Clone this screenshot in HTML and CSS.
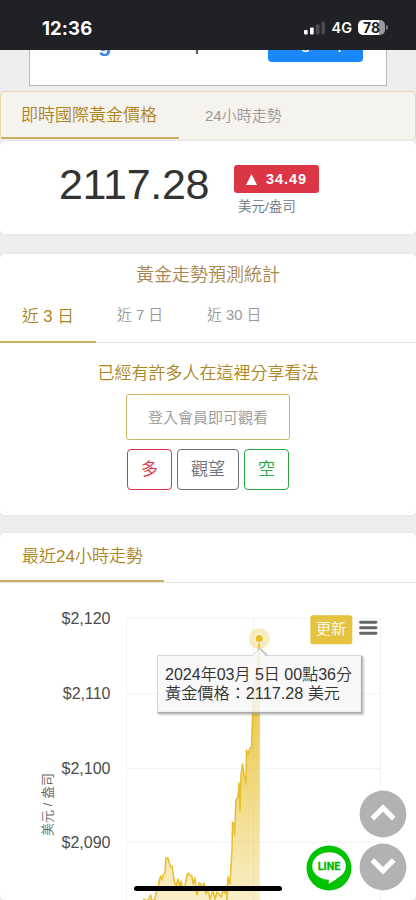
FILE: index.html
```html
<!DOCTYPE html>
<html lang="zh-Hant">
<head>
<meta charset="utf-8">
<title>即時國際黃金價格</title>
<link rel="stylesheet" href="styles.css">
</head>
<body>
<header class="status">
  <span class="clock">12:36</span>
  <div class="signals">
    <svg class="bars" width="21" height="14" viewBox="0 0 21 14"><rect x="0" y="9" width="3.7" height="4.5" rx="1" fill="#fff"/><rect x="6" y="6.5" width="3.7" height="7" rx="1" fill="#fff"/><rect x="11.800" y="3.500" width="3.700" height="10" rx="1" fill="#4b4c50"/><rect x="17.400" y="0.500" width="3.500" height="13" rx="1" fill="#4b4c50"/></svg>
    <span class="net">4G</span>
    <span class="battery">78</span><i class="battery-tip"></i>
  </div>
</header>
<section class="ad-row">
  <div class="ad">
    <span class="ad-g">g</span><span class="ad-p">p</span>
    <span class="ad-button">Sign up</span>
  </div>
</section>
<nav class="tabs gold-tabs">
  <span class="tab active">即時國際黃金價格</span>
  <span class="tab trend">24小時走勢</span>
</nav>
<section class="card price-card">
  <div class="price">2117.28</div>
  <div class="change">
    <div class="badge"><svg width="11" height="11" viewBox="0 0 11 11"><path d="M5.500 0L11 11H0Z" fill="#fff"/></svg>34.49</div>
    <div class="unit">美元/盎司</div>
  </div>
</section>
<section class="card forecast">
  <h2>黃金走勢預測統計</h2>
  <nav class="tabs day-tabs">
    <span class="tab active">近 3 日</span>
    <span class="tab seven">近 7 日</span>
    <span class="tab thirty">近 30 日</span>
  </nav>
  <p class="shared">已經有許多人在這裡分享看法</p>
  <div class="login">登入會員即可觀看</div>
  <div class="votes"><span class="vote up">多</span><span class="vote wait">觀望</span><span class="vote down">空</span></div>
</section>
<section class="card chart-card">
  <nav class="tabs chart-tabs"><span class="tab active">最近24小時走勢</span></nav>
  <div class="chart">
    <svg width="416" height="317" viewBox="0 583 416 317">
      <defs><linearGradient id="fill" x1="0" y1="640" x2="0" y2="925" gradientUnits="userSpaceOnUse"><stop offset="0" stop-color="#e8c02e"/><stop offset=".26" stop-color="#e8c02e" stop-opacity=".82"/><stop offset="1" stop-color="#e8c02e" stop-opacity=".2"/></linearGradient></defs>
      <path d="M126.500 900V618.500H380.500V900M253.500 618V900M126 693.500H380M126 768.500H380M126 842H380" fill="none" stroke="#f3f3f3"/>
      <g class="axis"><text x="110.500" y="624" text-anchor="end">$2,120</text><text x="110.500" y="698.500" text-anchor="end">$2,110</text><text x="110.500" y="773.500" text-anchor="end">$2,100</text><text x="110.500" y="848" text-anchor="end">$2,090</text></g>
      <text class="axis-title" transform="translate(51.500 804.500) rotate(-90)" text-anchor="middle">美元 / 盎司</text>
      <path id="area" fill="url(#fill)" d="M142 905L144 899L146 901L149 899L150.500 895L152 901L155 899L156 893L158 890L159 882L160.500 876L162 880L163 875L165 873L166 858L168 858L169.500 864L171 867L172 866L173 873L174 880L176 887L178 879L180 888L181 881L183 889L185 886L187 875L188 873L190 875L192 876L193 884L195 878L196 889L197 895L199 883L201 884L202 889L204 883L206 894L208 890L210 899L213 890L215 899L217 892L219 894L221 897L223 891L225 893L226 886L227 900L228 877L230 884L231 866L232 850L232.500 822L234 824L234.500 835L236 800L238 797L239 783L240 811L241 775L242.500 764L244 774L246 784L246.500 750L248 754L250 748L251.500 748L252 733L253 705L256 680L259.800 640V900Z"/>
      <path fill="none" stroke="#e8be2d" stroke-width="1.500" stroke-linejoin="round" d="M142 905L144 899L146 901L149 899L150.500 895L152 901L155 899L156 893L158 890L159 882L160.500 876L162 880L163 875L165 873L166 858L168 858L169.500 864L171 867L172 866L173 873L174 880L176 887L178 879L180 888L181 881L183 889L185 886L187 875L188 873L190 875L192 876L193 884L195 878L196 889L197 895L199 883L201 884L202 889L204 883L206 894L208 890L210 899L213 890L215 899L217 892L219 894L221 897L223 891L225 893L226 886L227 900L228 877L230 884L231 866L232 850L232.500 822L234 824L234.500 835L236 800L238 797L239 783L240 811L241 775L242.500 764L244 774L246 784L246.500 750L248 754L250 748L251.500 748L252 733L253 705L256 680L259.300 640"/>
      <circle cx="259.300" cy="638.700" r="10.500" fill="#e8be2d" fill-opacity=".3"/><circle cx="259.300" cy="638.700" r="4.200" fill="#e8be2d" stroke="#fff"/>
      <path class="bubble-fill" d="M157.500 655.500H253L259.500 648L266 655.500H361.500V712.500H157.500Z"/>
      <path class="bubble-edge" d="M361.800 656V712.800H157.500"/>
      <path d="M259.500 648L267 655.500" stroke="#c5c5c5" stroke-width="1.800"/>
      <g class="tip"><text x="165" y="679.500" textLength="187" lengthAdjust="spacingAndGlyphs" xml:space="preserve">2024年03月 5日 00點36分</text><text x="165" y="698.500" textLength="175" lengthAdjust="spacingAndGlyphs">黃金價格：2117.28 美元</text></g>
      <rect x="310.300" y="615.200" width="42" height="29" rx="2.500" fill="#e6c33f"/><text class="refresh" x="331" y="633.500" text-anchor="middle">更新</text>
      <path d="M360.500 622.200H376M360.500 627.700H376M360.500 633.200H376" stroke="#666" stroke-width="2.900" stroke-linecap="round"/>
    </svg>
  </div>
</section>
<aside class="floating">
  <svg width="46" height="46" viewBox="0 0 46 46"><circle cx="23" cy="23" r="22.500" fill="#00c300"/><ellipse cx="23" cy="21" rx="16.800" ry="13.800" fill="#fff"/><path d="M22.500 33.500Q23.500 36 22.500 39Q30 35 35 30Z" fill="#fff"/><text class="line-label" x="23" y="25" text-anchor="middle" textLength="22.500" lengthAdjust="spacingAndGlyphs">LINE</text></svg>
  <div class="arrows">
    <svg width="48" height="48" viewBox="0 0 48 48"><circle cx="24" cy="24" r="23.400" fill="#b2b2b2"/><path d="M13.300 28.700L24 18L34.700 28.700" fill="none" stroke="#fff" stroke-width="5.200"/></svg>
    <svg width="48" height="48" viewBox="0 0 48 48"><circle cx="24" cy="24" r="23.400" fill="#b2b2b2"/><path d="M13.300 17L24 27.700L34.700 17" fill="none" stroke="#fff" stroke-width="5.200"/></svg>
  </div>
</aside>
<div class="home-bar"></div>
</body>
</html>
```

FILE: styles.css
```css
* { box-sizing: border-box; }
body { margin: 0; width: 416px; height: 900px; overflow: hidden; position: relative; background: #ededed; color: #333; font-family: "Liberation Sans", "Noto Sans CJK TC", sans-serif; font-weight: 350; }
.status { height: 50px; background: #202125; color: #fff; display: flex; align-items: center; justify-content: space-between; padding: 5px 28px 0 42px; font-family: Inter, sans-serif; }
.clock { font-size: 18.500px; font-weight: 650; letter-spacing: .1px; }
.signals { display: flex; align-items: center; }
.net { font-size: 14.500px; font-weight: 600; margin: 0 6px 0 6px; }
.battery { width: 27px; height: 15px; border-radius: 5px; background: linear-gradient(90deg, #fff 78%, #999 78%); color: #202125; font-size: 14px; line-height: 15px; font-weight: 700; text-align: center; }
.battery-tip { width: 2px; height: 5px; margin-left: 1px; border-radius: 0 2px 2px 0; background: #77787b; }
.ad-row { height: 41px; padding: 0 29px; overflow: hidden; }
.ad { height: 36px; border: 1px solid #bbb; border-top: 0; background: #fff; display: flex; align-items: flex-start; }
.ad-g, .ad-p { font-size: 22px; line-height: 24px; margin-top: -18px; font-weight: 400; }
.ad-g { color: #4285e8; margin-left: 68px; font-weight: 700; }
.ad-p { color: #555; margin: -20px 0 0 83px; }
.ad-button { height: 42px; width: 95px; margin: -30px 23px 0 auto; border-radius: 4px; background: #1b87fc; color: #fff; text-align: center; font: 400 19px/44px "Liberation Sans", sans-serif; }
.tabs { display: flex; }
.tab { color: #999; white-space: nowrap; }
.tab.active { color: #ae841b; border-bottom: 2px solid #ccb060; }
.gold-tabs { height: 49px; background: #f5f3ee; border: 1px solid #ecd7ab; border-bottom-color: #eee; border-radius: 5px; }
.gold-tabs .active { width: 178px; padding-left: 20px; font-size: 17px; line-height: 47px; }
.trend { margin-left: 26px; font-size: 15px; line-height: 47px; }
.card { background: #fff; border-radius: 5px; box-shadow: 0 0 2px #ddd; }
.price-card { height: 93px; margin-top: 1px; display: flex; padding-left: 59px; }
.price { width: 175px; font-size: 43px; line-height: 86px; letter-spacing: -.3px; white-space: nowrap; }
.change { padding-top: 24px; }
.badge { width: 85px; height: 28px; border-radius: 3px; background: #dc3545; color: #fff; display: flex; align-items: center; justify-content: center; gap: 9px; font-size: 14.500px; letter-spacing: .9px; font-weight: 700; }
.unit { padding-left: 4px; font-size: 13.500px; line-height: 28px; color: #6c757d; }
.forecast { height: 261px; margin-top: 20px; display: flex; flex-direction: column; align-items: center; }
h2 { margin: 0; font-size: 18px; line-height: 43px; height: 40px; color: #ab8550; font-weight: 350; }
.day-tabs { align-self: stretch; height: 49px; border-bottom: 1px solid #e5e5e5; }
.day-tabs .active { width: 96px; height: 49px; padding-left: 22px; font-size: 16.700px; line-height: 45px; }
.seven { margin-left: 21px; }
.thirty { margin-left: 44px; }
.seven, .thirty { font-size: 14.800px; line-height: 42px; }
.shared { margin: 16px 0 6px; font-size: 17px; line-height: 29px; color: #ae841b; }
.login { width: 164px; height: 46px; border: 1px solid #cbb163; border-radius: 3px; color: #999; font-size: 15px; line-height: 45px; text-align: center; }
.votes { display: flex; gap: 5px; margin-top: 9px; }
.vote { height: 41px; border: 1px solid; border-radius: 4px; font-size: 17px; line-height: 39px; text-align: center; }
.up { width: 45px; color: #dc3545; }
.wait { width: 62px; color: #6c757d; }
.down { width: 45px; color: #28a745; }
.chart-card { height: 367px; margin-top: 18px; }
.chart-tabs { height: 50px; border-bottom: 1px solid #e5e5e5; }
.chart-tabs .active { width: 164px; height: 49px; padding-left: 22px; font-size: 17px; line-height: 47px; }
.chart svg { display: block; }
.axis { font-size: 16px; fill: #4c4c4c; }
.axis-title { font-size: 13px; fill: #666; }
.bubble-fill { fill: #f7f7f7; fill-opacity: .86; stroke: #d8d8d8; }
.bubble-edge { fill: none; stroke: #aaa; stroke-width: 1.4; filter: drop-shadow(1px 1px 1px rgba(0,0,0,.35)); }
.tip { font-size: 16px; fill: #333; }
.refresh { font-size: 15px; fill: #fff; }
.floating { position: absolute; right: 9px; bottom: 9px; display: flex; align-items: flex-end; gap: 7px; }
.arrows { display: grid; gap: 5px; }
.floating svg { display: block; }
.line-label { font: 700 11.500px Roboto, sans-serif; fill: #00b900; stroke: #00b900; stroke-width: .3px; }
.home-bar { position: absolute; left: 134px; top: 886px; width: 148px; height: 5px; border-radius: 3px; background: #000; }
```
